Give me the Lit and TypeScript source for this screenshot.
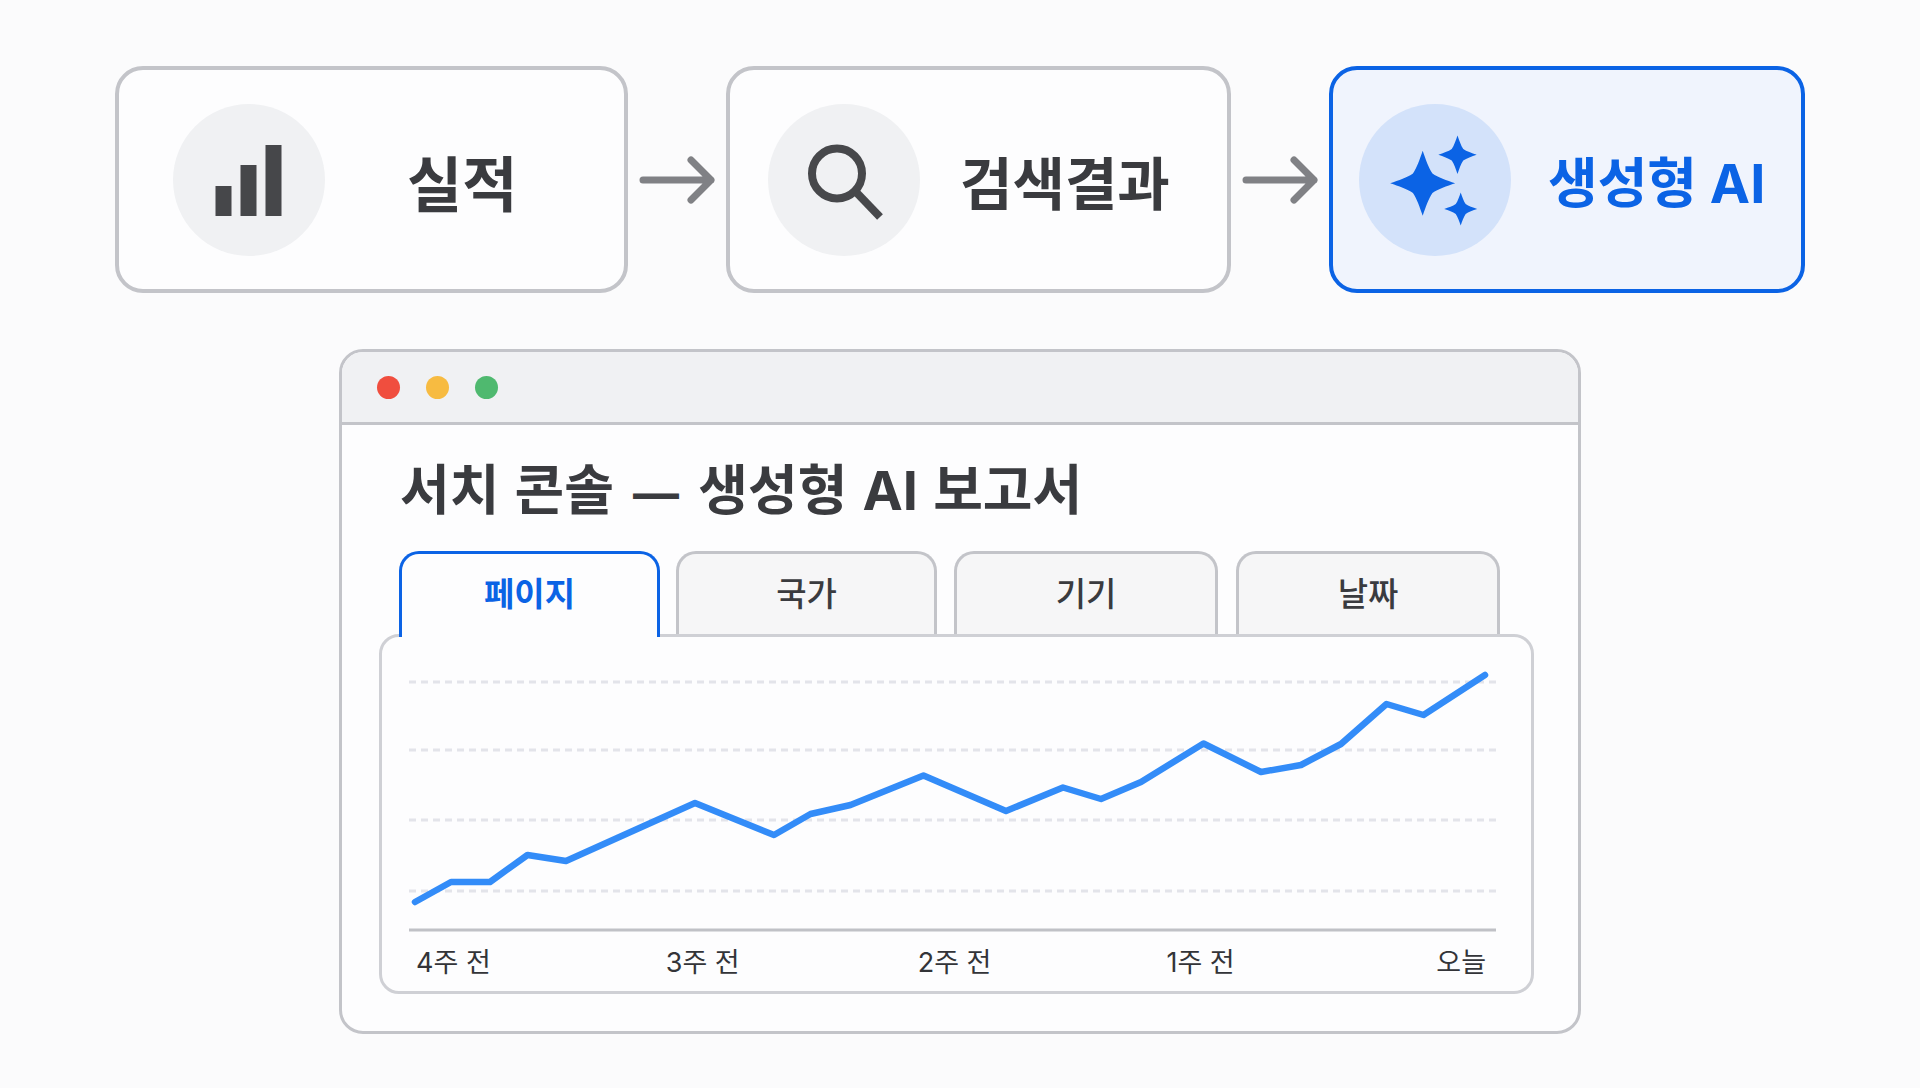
import { LitElement, html, css, svg } from 'lit';
import { customElement } from 'lit/decorators.js';

// line points, in page pixels
const points = [
  [415, 902], [451, 882], [490, 882], [527.5, 855], [566, 861], [695, 803], [774, 835],
  [810.5, 814], [850.5, 805], [923.5, 775.5], [1006, 811], [1063, 787.5], [1101, 799],
  [1141, 782], [1203.5, 743.5], [1261, 772], [1301, 765], [1341, 744], [1386.5, 704],
  [1423.5, 715], [1485, 675],
];
const grid = [682, 750, 820, 891];

// four pointed sparkle
function star(cx: number, cy: number, r: number) {
  const p = (x: number, y: number) => `${cx + x * r} ${cy + y * r}`;
  return `M${p(0, -1)}C${p(0.09, -0.74)} ${p(0.18, -0.47)} ${p(0.3, -0.3)}C${p(0.47, -0.18)} ${p(0.74, -0.09)} ${p(1, 0)}`
    + `C${p(0.74, 0.09)} ${p(0.47, 0.18)} ${p(0.3, 0.3)}C${p(0.18, 0.47)} ${p(0.09, 0.74)} ${p(0, 1)}`
    + `C${p(-0.09, 0.74)} ${p(-0.18, 0.47)} ${p(-0.3, 0.3)}C${p(-0.47, 0.18)} ${p(-0.74, 0.09)} ${p(-1, 0)}`
    + `C${p(-0.74, -0.09)} ${p(-0.47, -0.18)} ${p(-0.3, -0.3)}C${p(-0.18, -0.47)} ${p(-0.09, -0.74)} ${p(0, -1)}Z`;
}

const arrow = html`
  <svg class="arrow" width="76" height="50" viewBox="0 0 76 50" fill="none" stroke="#808185" stroke-width="7" stroke-linecap="round" stroke-linejoin="round">
    <path d="M4 25H72M52 5L72 25L52 45"></path>
  </svg>
`;

@customElement('app-root')
export class AppRoot extends LitElement {
  static styles = css`
    :host {
      display: block;
      width: 1920px;
      height: 1088px;
      overflow: hidden;
      background: #fbfbfc;
      font-family: "Inter", "Noto Sans CJK KR", sans-serif;
      color: #3a3b3f;
    }

    .steps {
      display: flex;
      align-items: center;
      gap: 11px;
      padding: 66px 0 0 115px;
    }

    .step {
      box-sizing: border-box;
      display: flex;
      align-items: center;
      height: 227px;
      border: 4px solid #c3c4c9;
      border-radius: 28px;
      background: #fdfdfe;
    }

    .perf { width: 513px; padding-left: 54px; gap: 82px; }
    .search { width: 505px; padding-left: 38px; gap: 40px; }
    .ai {
      width: 476px;
      padding-left: 26px;
      gap: 37px;
      border-color: #0b63e5;
      background: #f0f4fd;
      color: #0b63e5;
    }

    .circle {
      flex: none;
      width: 152px;
      height: 152px;
      border-radius: 50%;
      background: #f0f1f3;
    }
    .circle svg { display: block; }
    .ai .circle { background: #d3e2fa; }

    .step-label {
      padding-top: 10px;
      font-weight: 700;
      line-height: 64px;
      white-space: nowrap;
    }
    .perf .step-label { font-size: 60px; }
    .search .step-label { font-size: 57px; }
    .ai .step-label { padding-top: 8px; font-size: 54px; }

    .arrow { flex: none; }

    .window {
      box-sizing: border-box;
      width: 1242px;
      height: 685px;
      margin: 56px 0 0 339px;
      border: 3px solid #c3c4c9;
      border-radius: 24px;
      background: #fdfdfe;
      overflow: hidden;
    }

    .titlebar {
      box-sizing: border-box;
      display: flex;
      align-items: center;
      gap: 26px;
      height: 73px;
      padding-left: 35px;
      border-bottom: 3px solid #c3c4c9;
      background: #f0f1f3;
    }
    .dot { width: 23px; height: 23px; border-radius: 50%; }
    .red { background: #f04e3e; }
    .yellow { background: #f7bb41; }
    .green { background: #4fb96f; }

    h1 {
      margin: 0;
      padding: 34px 0 0 58px;
      font-size: 54px;
      font-weight: 700;
      line-height: 64px;
      word-spacing: 2.4px;
      white-space: nowrap;
    }
    .dash { margin: 0 4px; font-size: 46px; }

    .tabs {
      display: flex;
      align-items: flex-start;
      height: 83px;
      margin-top: 26px;
      padding-left: 57px;
    }

    .tab {
      box-sizing: border-box;
      display: flex;
      align-items: center;
      justify-content: center;
      height: 83px;
      padding-bottom: 5px;
      border: 3px solid #c3c4c9;
      border-bottom: none;
      border-radius: 20px 20px 0 0;
      background: #f6f6f7;
      font-size: 33px;
      font-weight: 500;
    }
    .tab.active {
      position: relative;
      z-index: 1;
      height: 86px;
      padding-bottom: 8px;
      border-color: #0b63e5;
      background: #fdfdfe;
      color: #0b63e5;
      font-weight: 700;
    }
    .t1 { width: 261px; margin-right: 16px; }
    .t2 { width: 261px; margin-right: 17px; }
    .t3 { width: 264px; margin-right: 18px; }
    .t4 { width: 264px; }

    .panel {
      box-sizing: border-box;
      width: 1155px;
      height: 360px;
      margin-left: 37px;
      padding-top: 23px;
      border: 3px solid #cfd0d5;
      border-radius: 20px;
      background: #fdfdfe;
    }
    .chart { display: block; margin-left: 27px; }

    .labels {
      display: flex;
      gap: 175px;
      padding: 12px 45px 0 34px;
      font-size: 27px;
      line-height: 32px;
      color: #333438;
    }
    .labels span:nth-child(3) { margin-left: 3px; }
    .labels span:last-child { margin-left: auto; }
  `;

  render() {
    return html`
      <div class="steps">
        <div class="step perf">
          <div class="circle">
            <svg width="152" height="152" viewBox="0 0 152 152" fill="#46474a">
              <rect x="42.5" y="82" width="16" height="30"></rect>
              <rect x="67.5" y="61" width="16" height="51"></rect>
              <rect x="92.5" y="41" width="16" height="71"></rect>
            </svg>
          </div>
          <span class="step-label">실적</span>
        </div>
        ${arrow}
        <div class="step search">
          <div class="circle">
            <svg width="152" height="152" viewBox="0 0 152 152" fill="none" stroke="#47484b" stroke-width="8">
              <circle cx="69" cy="69.5" r="25"></circle>
              <path d="M88 88L112 113"></path>
            </svg>
          </div>
          <span class="step-label">검색결과</span>
        </div>
        ${arrow}
        <div class="step ai">
          <div class="circle">
            <svg width="152" height="152" viewBox="0 0 152 152" fill="#0b63e5">
              <path d=${star(63.7, 79.2, 32.5)}></path>
              <path d=${star(98.5, 50.7, 19.2)}></path>
              <path d=${star(101.7, 105, 16.5)}></path>
            </svg>
          </div>
          <span class="step-label">생성형 AI</span>
        </div>
      </div>

      <div class="window">
        <div class="titlebar">
          <span class="dot red"></span>
          <span class="dot yellow"></span>
          <span class="dot green"></span>
        </div>
        <h1>서치 콘솔 <span class="dash">—</span> 생성형 AI 보고서</h1>
        <div class="tabs">
          <div class="tab active t1">페이지</div>
          <div class="tab t2">국가</div>
          <div class="tab t3">기기</div>
          <div class="tab t4">날짜</div>
        </div>
        <div class="panel">
          <svg class="chart" width="1087" height="275" viewBox="409 660 1087 275" fill="none">
            ${grid.map(y => svg`<line x1="409" x2="1496" y1=${y} y2=${y} stroke="#e3e4ea" stroke-width="3" stroke-dasharray="7 5"></line>`)}
            <line x1="409" x2="1496" y1="930" y2="930" stroke="#c0c1c6" stroke-width="3"></line>
            <polyline points=${points.map(p => p.join(',')).join(' ')} stroke="#338cf8" stroke-width="6.5" stroke-linecap="round" stroke-linejoin="round"></polyline>
          </svg>
          <div class="labels">
            <span>4주 전</span>
            <span>3주 전</span>
            <span>2주 전</span>
            <span>1주 전</span>
            <span>오늘</span>
          </div>
        </div>
      </div>
    `;
  }
}
